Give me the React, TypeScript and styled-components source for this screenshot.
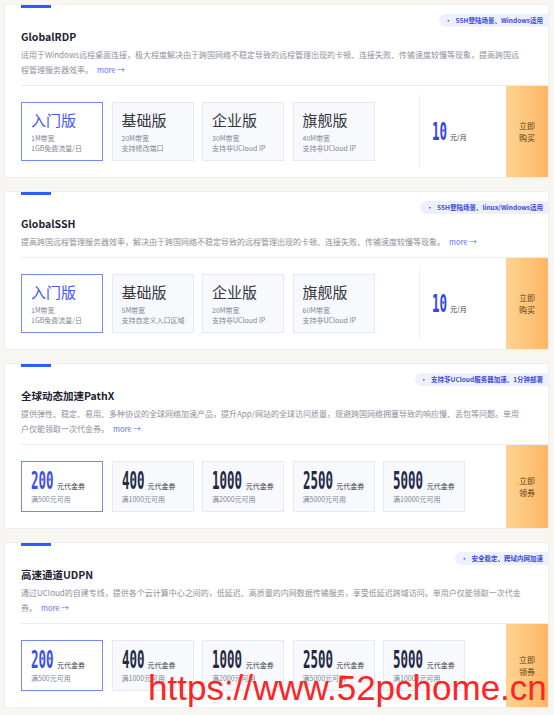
import React from "react";
import styled, { createGlobalStyle } from "styled-components";

const Global = createGlobalStyle`
  html, body { margin: 0; padding: 0; background: #f8f6f1; }
  body { font-family: "Noto Sans CJK SC", "Noto Sans", sans-serif; }
  * { box-sizing: border-box; }
`;

const Page = styled.div`
  position: relative;
  width: 554px;
  height: 715px;
  padding: 4px 5px 0 4px;
  overflow: hidden;
`;

const Card = styled.section`
  position: relative;
  background: #fff;
  border: 1px solid #eceef4;
  margin-bottom: 13px;
`;

const Header = styled.div`
  margin-left: 16px;
  padding-bottom: 8px;
  border-bottom: 1px solid #e9edf7;
`;

const Accent = styled.div`
  width: 30px;
  height: 3px;
  background: #2f5cff;
`;

const Title = styled.h3`
  margin: 22px 0 0;
  font-size: 10.5px;
  line-height: 14px;
  font-weight: 700;
  color: #1d2331;
`;

const Desc = styled.div`
  margin-top: 3px;
  font-size: 8px;
  line-height: 15px;
  color: #8b909a;
`;

const DescLine = styled.div`
  white-space: nowrap;
`;

const More = styled.span`
  margin-left: 4px;
  font-size: 7.5px;
  color: #5b6ef0;
`;

const Tag = styled.div`
  position: absolute;
  top: 9px;
  right: 0;
  height: 13px;
  padding: 0 5px 0 6px;
  border-radius: 7px 0 0 7px;
  background: #eef1fd;
  color: #3a4bd6;
  font-size: 6.5px;
  font-weight: 700;
  line-height: 13px;
  white-space: nowrap;
`;

const Dot = styled.span`
  margin-right: 4px;
`;

const Bottom = styled.div`
  display: flex;
  align-items: stretch;
  padding-left: 16px;
`;

const Options = styled.div`
  display: flex;
  gap: 8.5px;
  padding: 16px 0;
`;

const Box = styled.div<{ $active?: boolean }>`
  width: 82px;
  padding: 7px 9px;
  border: 1px solid ${(p) => (p.$active ? "#7387f6" : "#e5e9f3")};
  background: ${(p) => (p.$active ? "#fff" : "#f8f9fd")};
`;

const BoxTitle = styled.div<{ $active?: boolean }>`
  font-size: 15px;
  line-height: 20px;
  color: ${(p) => (p.$active ? "#4458ef" : "#33363d")};
  margin-bottom: 3px;
`;

const BoxSub = styled.div`
  font-size: 7px;
  line-height: 10px;
  color: #7e8594;
  white-space: nowrap;
`;

const NumRow = styled.div`
  display: flex;
  align-items: baseline;
  height: 24px;
  line-height: 24px;
`;

const Digits = styled.span<{ $n: number; $color: string }>`
  display: inline-block;
  width: ${(p) => p.$n * 7.7}px;
  font-family: "DejaVu Sans Mono", monospace;
  font-size: 24px;
  font-weight: 700;
  color: ${(p) => p.$color};
  white-space: nowrap;
`;

const DigitsInner = styled.span`
  display: inline-block;
  transform: scaleX(0.52);
  transform-origin: left center;
`;

const Unit = styled.span`
  margin-left: 3px;
  font-size: 7px;
  color: #333843;
  white-space: nowrap;
`;

const VSub = styled.div`
  margin-top: 1px;
  font-size: 7px;
  line-height: 10px;
  color: #7e8594;
  white-space: nowrap;
`;

const PriceArea = styled.div`
  align-self: center;
  margin-left: 44px;
  height: 73px;
  padding-left: 12px;
  border-left: 1px solid #eef0f6;
  display: flex;
  align-items: center;
`;

const Buy = styled.button`
  margin-left: auto;
  width: 42px;
  border: none;
  padding: 0;
  background: linear-gradient(90deg, #fdd492 0%, #fdb665 100%);
  color: #5b3c14;
  font-family: inherit;
  font-size: 8px;
  line-height: 12px;
  display: flex;
  flex-direction: column;
  align-items: center;
  justify-content: center;
`;

const Watermark = styled.div`
  position: absolute;
  left: 148px;
  top: 670px;
  font-family: "Liberation Sans", Arial, sans-serif;
  font-size: 35px;
  line-height: 35px;
  color: #ff2323;
  white-space: nowrap;
  pointer-events: none;
`;

type Plan = { name: string; a: string; b: string };
type Voucher = { v: string; cond: string };

type CardData = {
  title: string;
  tag: string;
  lines: string[];
  plans?: Plan[];
  vouchers?: Voucher[];
  buy: [string, string];
};

const vouchers: Voucher[] = [
  { v: "200", cond: "满500元可用" },
  { v: "400", cond: "满1000元可用" },
  { v: "1000", cond: "满2000元可用" },
  { v: "2500", cond: "满5000元可用" },
  { v: "5000", cond: "满10000元可用" },
];

const cards: CardData[] = [
  {
    title: "GlobalRDP",
    tag: "SSH登陆场景、Windows适用",
    lines: [
      "适用于Windows远程桌面连接，极大程度解决由于跨国网络不稳定导致的远程管理出现的卡顿、连接失败、传输速度较慢等现象，提高跨国远",
      "程管理服务器效率。",
    ],
    plans: [
      { name: "入门版", a: "1M带宽", b: "1GB免费流量/日" },
      { name: "基础版", a: "20M带宽", b: "支持修改端口" },
      { name: "企业版", a: "30M带宽", b: "支持非UCloud IP" },
      { name: "旗舰版", a: "40M带宽", b: "支持非UCloud IP" },
    ],
    buy: ["立即", "购买"],
  },
  {
    title: "GlobalSSH",
    tag: "SSH登陆场景、linux/Windows适用",
    lines: [
      "提高跨国远程管理服务器效率，解决由于跨国网络不稳定导致的远程管理出现的卡顿、连接失败、传输速度较慢等现象。",
    ],
    plans: [
      { name: "入门版", a: "1M带宽", b: "1GB免费流量/日" },
      { name: "基础版", a: "5M带宽", b: "支持自定义入口区域" },
      { name: "企业版", a: "20M带宽", b: "支持非UCloud IP" },
      { name: "旗舰版", a: "60M带宽", b: "支持非UCloud IP" },
    ],
    buy: ["立即", "购买"],
  },
  {
    title: "全球动态加速PathX",
    tag: "支持非UCloud服务器加速、1分钟部署",
    lines: [
      "提供弹性、稳定、易用、多种协议的全球网络加速产品，提升App/网站的全球访问质量，规避跨国网络拥塞导致的响应慢、丢包等问题。单用",
      "户仅能领取一次代金券。",
    ],
    vouchers,
    buy: ["立即", "领券"],
  },
  {
    title: "高速通道UDPN",
    tag: "安全稳定、跨域内网加速",
    lines: [
      "通过UCloud的自建专线，提供各个云计算中心之间的，低延迟、高质量的内网数据传输服务，享受低延迟跨域访问。单用户仅能领取一次代金",
      "券。",
    ],
    vouchers,
    buy: ["立即", "领券"],
  },
];

function ProductCard({ c }: { c: CardData }) {
  return (
    <Card>
      <Tag>
        <Dot>•</Dot>
        {c.tag}
      </Tag>
      <Header>
        <Accent />
        <Title>{c.title}</Title>
        <Desc>
          {c.lines.map((l, i) => (
            <DescLine key={i}>
              {l}
              {i === c.lines.length - 1 && <More>more →</More>}
            </DescLine>
          ))}
        </Desc>
      </Header>
      <Bottom>
        <Options>
          {c.plans &&
            c.plans.map((p, i) => (
              <Box key={i} $active={i === 0}>
                <BoxTitle $active={i === 0}>{p.name}</BoxTitle>
                <BoxSub>{p.a}</BoxSub>
                <BoxSub>{p.b}</BoxSub>
              </Box>
            ))}
          {c.vouchers &&
            c.vouchers.map((v, i) => (
              <Box key={i} $active={i === 0}>
                <NumRow>
                  <Digits $n={v.v.length} $color={i === 0 ? "#3a4ef0" : "#1f2a45"}>
                    <DigitsInner>{v.v}</DigitsInner>
                  </Digits>
                  <Unit>元代金券</Unit>
                </NumRow>
                <VSub>{v.cond}</VSub>
              </Box>
            ))}
        </Options>
        {c.plans && (
          <PriceArea>
            <NumRow>
              <Digits $n={2} $color="#3447e6">
                <DigitsInner>10</DigitsInner>
              </Digits>
              <Unit>元/月</Unit>
            </NumRow>
          </PriceArea>
        )}
        <Buy>
          <span>{c.buy[0]}</span>
          <span>{c.buy[1]}</span>
        </Buy>
      </Bottom>
    </Card>
  );
}

export default function App() {
  return (
    <Page>
      <Global />
      {cards.map((c, i) => (
        <ProductCard key={i} c={c} />
      ))}
      <Watermark>https://www.52pchome.cn</Watermark>
    </Page>
  );
}
